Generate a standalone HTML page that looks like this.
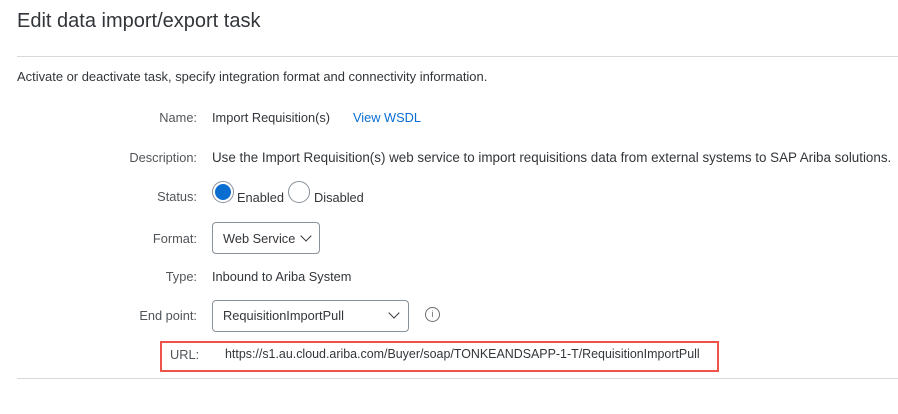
<!DOCTYPE html>
<html><head><style>
body{margin:0;width:898px;height:414px;background:#fff;font-family:"Liberation Sans",sans-serif;color:#32363a;position:relative;overflow:hidden}
.a{position:absolute;white-space:nowrap}
.l{position:absolute;right:701px;white-space:nowrap;font-size:12.8px;color:#515559}
.v{position:absolute;left:212px;white-space:nowrap;font-size:12.8px;color:#32363a}
.hr{position:absolute;left:17px;right:0;height:1px;background:#d9d9d9}
.box{position:absolute;border:1px solid #89919a;border-radius:4px;background:#fff}
.chev{position:absolute;width:7px;height:7px;border-right:1.3px solid #32363a;border-bottom:1.3px solid #32363a;transform:rotate(45deg)}
</style></head><body>
<div class="a" style="left:17px;top:10px;font-size:20px;color:#32363a">Edit data import/export task</div>
<div class="hr" style="top:56px"></div>
<div class="a" style="left:17px;top:69px;font-size:12.95px">Activate or deactivate task, specify integration format and connectivity information.</div>

<div class="l" style="top:110px">Name:</div>
<div class="v" style="top:110px">Import Requisition(s)</div>
<div class="a" style="left:353px;top:110px;font-size:12.8px;color:#0a6ed1">View WSDL</div>

<div class="l" style="top:150px">Description:</div>
<div class="v" style="top:150px;font-size:13.4px">Use the Import Requisition(s) web service to import requisitions data from external systems to SAP Ariba solutions.</div>

<div class="l" style="top:189px">Status:</div>
<div class="a" style="left:212px;top:181px;width:22px;height:22px;border:1px solid #89919a;border-radius:50%;box-sizing:border-box"></div>
<div class="a" style="left:215px;top:184px;width:16px;height:16px;background:#0a6ed1;border-radius:50%"></div>
<div class="v" style="left:237px;top:190px">Enabled</div>
<div class="a" style="left:288px;top:181px;width:22px;height:22px;border:1px solid #89919a;border-radius:50%;box-sizing:border-box"></div>
<div class="v" style="left:314px;top:190px">Disabled</div>

<div class="l" style="top:231px">Format:</div>
<div class="box" style="left:212px;top:222px;width:106px;height:30px"></div>
<div class="v" style="left:223px;top:231px">Web Service</div>
<div class="chev" style="left:302px;top:232px"></div>

<div class="l" style="top:269px">Type:</div>
<div class="v" style="top:269px">Inbound to Ariba System</div>

<div class="l" style="top:308px">End point:</div>
<div class="box" style="left:212px;top:300px;width:195px;height:30px"></div>
<div class="v" style="left:223px;top:308px">RequisitionImportPull</div>
<div class="chev" style="left:390px;top:309px"></div>
<div class="a" style="left:425px;top:307px;width:13px;height:13px;border:1px solid #6a6d70;border-radius:50%;font-size:9px;text-align:center;line-height:13px;color:#6a6d70">i</div>

<div class="a" style="left:160px;top:341px;width:555px;height:27px;border:2px solid #ee5349"></div>
<div class="a" style="left:170px;top:347px;font-size:12.8px;color:#515559">URL:</div>
<div class="v" style="left:225px;top:347px;font-size:12.45px">https://s1.au.cloud.ariba.com/Buyer/soap/TONKEANDSAPP-1-T/RequisitionImportPull</div>
<div class="hr" style="top:378px"></div>
</body></html>
